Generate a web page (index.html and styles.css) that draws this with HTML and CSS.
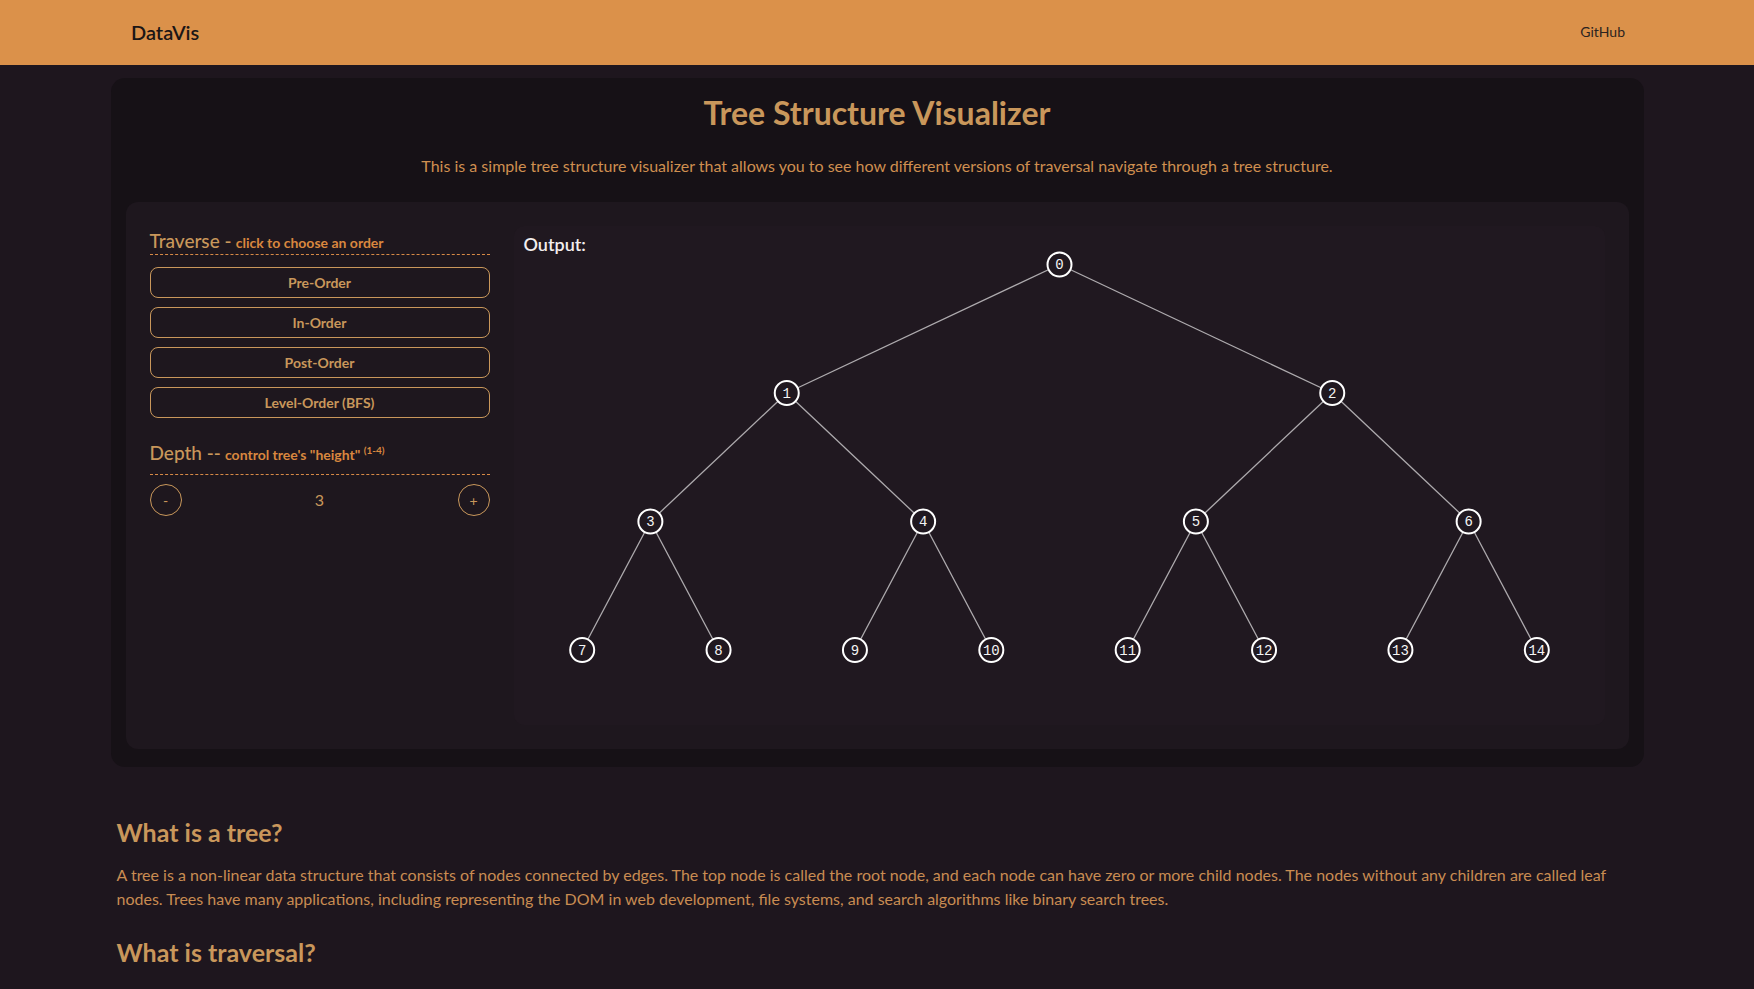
FILE: index.html
```html
<!DOCTYPE html>
<html lang="en">
<head>
<meta charset="utf-8">
<title>DataVis - Tree Structure Visualizer</title>
<link rel="stylesheet" href="styles.css">
</head>
<body>
<header class="topbar">
  <a class="brand" href="#">DataVis</a>
  <a class="nav-link" href="#">GitHub</a>
</header>
<main class="page">
  <section class="visualizer">
    <h1 class="vis-title">Tree Structure Visualizer</h1>
    <p class="vis-desc">This is a simple tree structure visualizer that allows you to see how different versions of traversal navigate through a tree structure.</p>
    <div class="workbench">
      <aside class="controls">
        <div class="control-head"><span class="control-name">Traverse -</span> <span class="control-hint">click to choose an order</span></div>
        <div class="order-list">
          <button class="order-btn">Pre-Order</button>
          <button class="order-btn">In-Order</button>
          <button class="order-btn">Post-Order</button>
          <button class="order-btn">Level-Order (BFS)</button>
        </div>
        <div class="control-head depth-head"><span class="control-name">Depth --</span> <span class="control-hint">control tree's "height" <sup>(1-4)</sup></span></div>
        <div class="depth-row">
          <button class="round-btn">-</button>
          <span class="depth-value">3</span>
          <button class="round-btn">+</button>
        </div>
      </aside>
      <div class="output">
        <span class="output-label">Output:</span>
        <svg class="tree" viewBox="0 0 1091 499" preserveAspectRatio="none">
          <g class="edges">
            <line x1="545.5" y1="38.5" x2="272.75" y2="167"/>
            <line x1="545.5" y1="38.5" x2="818.25" y2="167"/>
            <line x1="272.75" y1="167" x2="136.38" y2="295.5"/>
            <line x1="272.75" y1="167" x2="409.13" y2="295.5"/>
            <line x1="818.25" y1="167" x2="681.88" y2="295.5"/>
            <line x1="818.25" y1="167" x2="954.63" y2="295.5"/>
            <line x1="136.38" y1="295.5" x2="68.19" y2="424"/>
            <line x1="136.38" y1="295.5" x2="204.56" y2="424"/>
            <line x1="409.13" y1="295.5" x2="340.94" y2="424"/>
            <line x1="409.13" y1="295.5" x2="477.31" y2="424"/>
            <line x1="681.88" y1="295.5" x2="613.69" y2="424"/>
            <line x1="681.88" y1="295.5" x2="750.06" y2="424"/>
            <line x1="954.63" y1="295.5" x2="886.44" y2="424"/>
            <line x1="954.63" y1="295.5" x2="1022.81" y2="424"/>
          </g>
          <g class="node" transform="translate(545.5 38.5)"><circle r="12"/><text dy="0.35em">0</text></g>
          <g class="node" transform="translate(272.75 167)"><circle r="12"/><text dy="0.35em">1</text></g>
          <g class="node" transform="translate(818.25 167)"><circle r="12"/><text dy="0.35em">2</text></g>
          <g class="node" transform="translate(136.38 295.5)"><circle r="12"/><text dy="0.35em">3</text></g>
          <g class="node" transform="translate(409.13 295.5)"><circle r="12"/><text dy="0.35em">4</text></g>
          <g class="node" transform="translate(681.88 295.5)"><circle r="12"/><text dy="0.35em">5</text></g>
          <g class="node" transform="translate(954.63 295.5)"><circle r="12"/><text dy="0.35em">6</text></g>
          <g class="node" transform="translate(68.19 424)"><circle r="12"/><text dy="0.35em">7</text></g>
          <g class="node" transform="translate(204.56 424)"><circle r="12"/><text dy="0.35em">8</text></g>
          <g class="node" transform="translate(340.94 424)"><circle r="12"/><text dy="0.35em">9</text></g>
          <g class="node" transform="translate(477.31 424)"><circle r="12"/><text dy="0.35em">10</text></g>
          <g class="node" transform="translate(613.69 424)"><circle r="12"/><text dy="0.35em">11</text></g>
          <g class="node" transform="translate(750.06 424)"><circle r="12"/><text dy="0.35em">12</text></g>
          <g class="node" transform="translate(886.44 424)"><circle r="12"/><text dy="0.35em">13</text></g>
          <g class="node" transform="translate(1022.81 424)"><circle r="12"/><text dy="0.35em">14</text></g>
        </svg>
      </div>
    </div>
  </section>
  <article class="info">
    <h2 class="info-title">What is a tree?</h2>
    <p class="info-text">A tree is a non-linear data structure that consists of nodes connected by edges. The top node is called the root node, and each node can have zero or more child nodes. The nodes without any children are called leaf nodes. Trees have many applications, including representing the DOM in web development, file systems, and search algorithms like binary search trees.</p>
    <h2 class="info-title">What is traversal?</h2>
    <p class="info-text">Tree traversal is the process of visiting all the nodes in a tree exactly once. There are different ways to traverse a tree, and each one visits the nodes in a different order depending on when the current node is processed.</p>
  </article>
</main>
</body>
</html>
```

FILE: styles.css
```css
* {
  box-sizing: border-box;
}

body {
  margin: 0;
  background: #1e161e;
  color: #c98c52;
  font-family: Lato, "Open Sans", sans-serif;
  font-size: 16px;
  line-height: 24px;
}

.topbar {
  height: 65px;
  background: #db914a;
  display: flex;
  align-items: center;
  justify-content: space-between;
  padding: 0 129px 2px 131px;
}

.brand {
  color: #1b1616;
  font-size: 20px;
  font-weight: 600;
  text-decoration: none;
}

.nav-link {
  color: #2a2320;
  font-size: 14px;
  text-decoration: none;
}

.page {
  padding-top: 13px;
}

.visualizer {
  width: 1533px;
  margin: 0 auto;
  background: #161116;
  border-radius: 14px;
  padding: 15px 15px 18px;
}

.vis-title {
  margin: 0;
  text-align: center;
  font-size: 32px;
  line-height: 40px;
  font-weight: 700;
  color: #c9975b;
}

.vis-desc {
  margin: 21px 0 0;
  text-align: center;
  font-size: 16px;
  line-height: 24px;
  color: #cf8f50;
}

.workbench {
  margin-top: 24px;
  background: #1e171e;
  border-radius: 12px;
  padding: 24px;
  display: flex;
  gap: 24px;
}

.controls {
  width: 340px;
  flex: none;
  padding-top: 1px;
}

.control-head {
  height: 28px;
  line-height: 28px;
  border-bottom: 1px dashed #d88a46;
  white-space: nowrap;
}

.control-name {
  font-size: 19px;
  font-weight: 500;
  color: #c9975b;
}

.control-hint {
  font-size: 14px;
  font-weight: 700;
  color: #d9873f;
}

.control-hint sup {
  font-size: 10px;
  line-height: 0;
  vertical-align: 6px;
}

.order-list {
  display: flex;
  flex-direction: column;
  gap: 9px;
  margin-top: 12px;
}

.order-btn {
  height: 31px;
  width: 100%;
  background: transparent;
  border: 1px solid #c9975b;
  border-radius: 8px;
  color: #c9975b;
  font-family: inherit;
  font-size: 14px;
  font-weight: 700;
  cursor: pointer;
}

.depth-head {
  margin-top: 21px;
  height: 36px;
  padding-bottom: 8px;
}

.depth-row {
  display: flex;
  align-items: center;
  justify-content: space-between;
  margin-top: 9px;
}

.round-btn {
  width: 32px;
  height: 32px;
  border-radius: 50%;
  background: transparent;
  border: 1px solid #c9975b;
  color: #c9975b;
  font-family: inherit;
  font-size: 14px;
  padding: 0;
  cursor: pointer;
}

.depth-value {
  font-size: 16px;
  color: #c9975b;
}

.output {
  flex: 1;
  position: relative;
  background: #201820;
  border-radius: 10px;
}

.output-label {
  position: absolute;
  left: 10px;
  top: 6px;
  font-size: 18px;
  font-weight: 600;
  line-height: 24px;
  color: #f2eeee;
}

.tree {
  display: block;
  width: 100%;
  height: 499px;
}

.edges line {
  stroke: #aeabae;
  stroke-width: 1.3;
}

.node circle {
  fill: #201820;
  stroke: #ffffff;
  stroke-width: 2;
}

.node text {
  fill: #f4f4f4;
  font-family: "Liberation Mono", "DejaVu Sans Mono", monospace;
  font-size: 14px;
  text-anchor: middle;
}

.info {
  width: 1533px;
  margin: 0 auto;
  padding: 49px 6px 0;
}

.info-title {
  margin: 0;
  font-size: 25px;
  line-height: 32px;
  font-weight: 700;
  color: #c9975b;
}

.info-text {
  margin: 15px 0 25px;
  font-size: 16px;
  line-height: 24px;
  color: #c98c52;
}
```
